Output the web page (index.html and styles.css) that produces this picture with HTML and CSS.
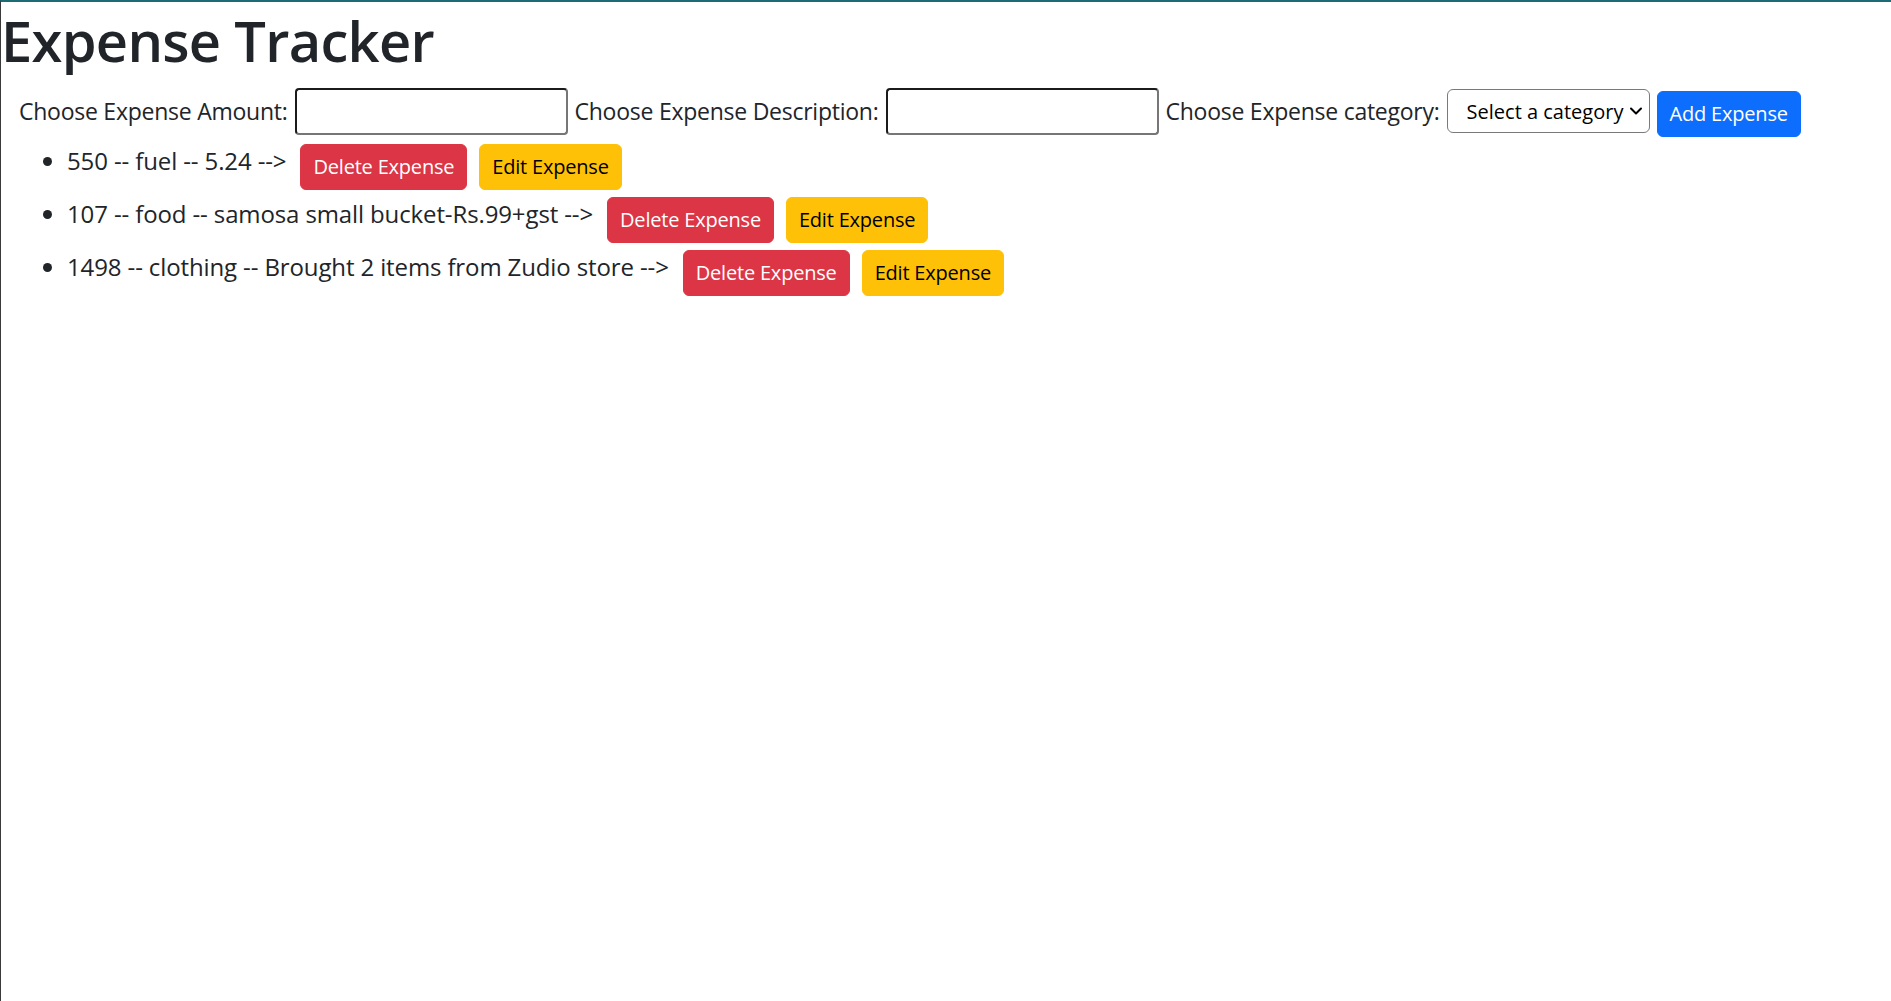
FILE: index.html
```html
<!DOCTYPE html>
<html lang="en">
<head>
<meta charset="utf-8">
<title>Expense Tracker</title>
<link rel="stylesheet" href="styles.css">
</head>
<body>
  <h1 class="title">Expense Tracker</h1>
  <div class="app">
    <form class="expense-form">
      <label class="field-label" for="amount">Choose Expense Amount:</label>
      <input class="field-input" id="amount" type="text">
      <label class="field-label" for="desc">Choose Expense Description:</label>
      <input class="field-input" id="desc" type="text">
      <label class="field-label" for="cat">Choose Expense category:</label>
      <div class="select-wrap">
        <select class="field-select" id="cat">
          <option>Select a category</option>
        </select>
        <svg class="chevron" width="12" height="8" viewBox="0 0 12 8"><path d="M1 1.5 L6 6.5 L11 1.5" stroke="#000" stroke-width="2" fill="none" stroke-linecap="round" stroke-linejoin="round"/></svg>
      </div>
      <button class="btn btn-primary" type="button">Add Expense</button>
    </form>
    <ul class="expense-list">
      <li class="expense-item"><span class="item-text">550 -- fuel -- 5.24 --&gt;</span><button class="btn btn-danger" type="button">Delete Expense</button><button class="btn btn-warning" type="button">Edit Expense</button></li>
      <li class="expense-item"><span class="item-text">107 -- food -- samosa small bucket-Rs.99+gst --&gt;</span><button class="btn btn-danger" type="button">Delete Expense</button><button class="btn btn-warning" type="button">Edit Expense</button></li>
      <li class="expense-item"><span class="item-text">1498 -- clothing -- Brought 2 items from Zudio store --&gt;</span><button class="btn btn-danger" type="button">Delete Expense</button><button class="btn btn-warning" type="button">Edit Expense</button></li>
    </ul>
  </div>
</body>
</html>
```
FILE: styles.css
```css
html, body {
  margin: 0;
  padding: 0;
}
body {
  border-top: 2px solid #1d6b74;
  border-left: 1px solid #3a3a3a;
  min-height: 100vh;
  box-sizing: border-box;
  background: #fff;
  color: #212529;
  font-family: "Open Sans", "Noto Sans", sans-serif;
  font-size: 24px;
  line-height: 36px;
}
.title {
  margin: 2px 0 12px 0;
  font-size: 56px;
  line-height: 72px;
  font-weight: 600;
  letter-spacing: -0.7px;
  color: #212529;
}
.app {
  padding-left: 18px;
}
.expense-form {
  display: flex;
  align-items: flex-start;
  gap: 7px;
  margin: 0;
}
.field-label {
  margin-top: 5px;
  font-size: 23px;
  letter-spacing: -0.25px;
  white-space: nowrap;
}
.field-input {
  width: 273px;
  height: 47px;
  box-sizing: border-box;
  border-style: solid;
  border-width: 2px;
  border-color: #1b1b1b #767676 #767676 #1b1b1b;
  border-radius: 4px;
  padding: 2px 4px;
  font-size: 20px;
  font-family: inherit;
  background: #fff;
}
.select-wrap {
  position: relative;
  margin-top: 1px;
  width: 203px;
  height: 44px;
}
.field-select {
  appearance: none;
  -webkit-appearance: none;
  width: 100%;
  height: 100%;
  box-sizing: border-box;
  border: 1px solid #7a7a7a;
  border-radius: 6px;
  padding: 0 0 0 19px;
  font-family: inherit;
  font-size: 20px;
  color: #000;
  background: #fff;
}
.chevron {
  position: absolute;
  right: 8px;
  top: 18px;
  pointer-events: none;
}
.btn {
  box-sizing: border-box;
  height: 46px;
  padding: 6px 12px;
  border: 1px solid transparent;
  border-radius: 6px;
  font-family: inherit;
  font-size: 20px;
  letter-spacing: -0.2px;
  line-height: 32px;
  white-space: nowrap;
  cursor: pointer;
}
.expense-form .btn {
  margin-top: 3px;
}
.btn-primary {
  background: #0d6efd;
  border-color: #0d6efd;
  color: #fff;
}
.btn-danger {
  background: #dc3545;
  border-color: #dc3545;
  color: #fff;
}
.btn-warning {
  background: #ffc107;
  border-color: #ffc107;
  color: #000;
}
.expense-list {
  margin: 6px 0 0 0;
  padding-left: 48px;
  list-style: none;
}
.expense-item {
  position: relative;
  display: flex;
  align-items: flex-start;
  margin-bottom: 6px;
}
.expense-item::before {
  content: "";
  position: absolute;
  left: -24px;
  top: 14px;
  width: 9px;
  height: 9px;
  border-radius: 50%;
  background: #212529;
}
.item-text {
  white-space: nowrap;
  letter-spacing: -0.12px;
}
.expense-item .btn {
  margin-top: 1px;
}
.expense-item .btn-danger {
  margin-left: 14px;
}
.expense-item .btn-warning {
  margin-left: 12px;
}
```
